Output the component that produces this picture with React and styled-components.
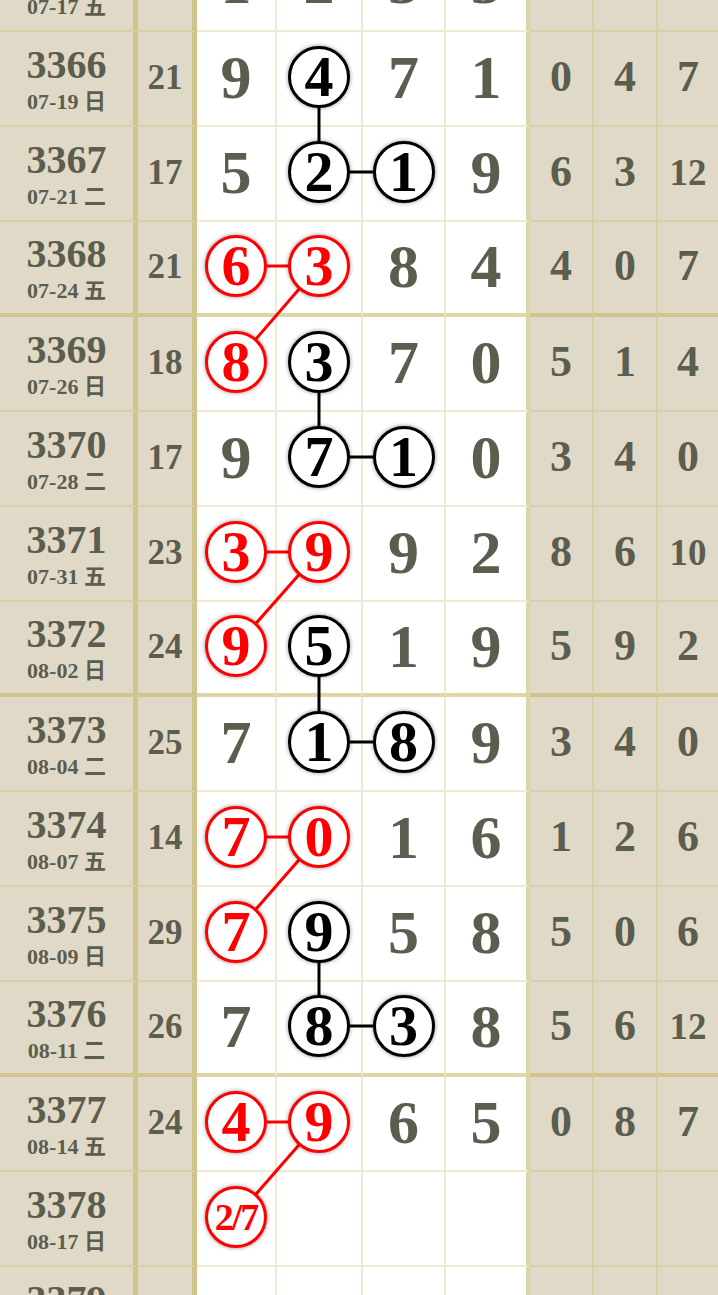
import React from "react";
import styled, { createGlobalStyle } from "styled-components";

const Global = createGlobalStyle`
  html, body { margin: 0; padding: 0; overflow: hidden; background: #ffffff; }
  body { font-family: "Liberation Serif", "Noto Sans CJK SC", serif; }
`;

const COLS = [138, 59, 80, 86, 83, 84, 64, 64, 60];
const ROW_H = 95;
const TOP_OFFSET = -63;
const THIN = "rgba(200,185,100,0.3)";
const THICK = "rgba(195,180,95,0.55)";
const INK = "#5b5d4f";

const Board = styled.div`
  position: relative;
  display: grid;
  grid-template-columns: ${COLS.map((c) => c + "px").join(" ")};
  grid-auto-rows: ${ROW_H}px;
  margin-top: ${TOP_OFFSET}px;
  width: 718px;
`;

const Cell = styled.div`
  box-sizing: border-box;
  display: flex;
  flex-direction: column;
  align-items: center;
  justify-content: center;
  padding-bottom: 3px;
  background: ${(p) => (p.$white ? "#ffffff" : "#e1d9c7")};
  border-right: ${(p) => p.$br}px solid ${(p) => (p.$br > 2 ? THICK : THIN)};
  border-bottom: ${(p) => (p.$thick ? 4 : 2)}px solid ${(p) => (p.$thick ? THICK : THIN)};
  color: ${INK};
  font-weight: 700;
  font-family: "Liberation Serif", "Noto Sans CJK SC", serif;
`;

const IssueNo = styled.div`
  font-size: 40px;
  line-height: 1;
  margin-top: 3px;
`;

const DateText = styled.div`
  font-size: 22px;
  line-height: 1;
  margin-top: 6px;
  white-space: nowrap;
  font-family: "Liberation Serif", "Noto Sans CJK SC", sans-serif;
`;

const Sum = styled.div`
  font-size: 35px;
  line-height: 1;
`;

const Digit = styled.div`
  font-size: 62px;
  line-height: 1;
`;

const Side = styled.div`
  font-size: ${(p) => (p.$two ? 37 : 44)}px;
  line-height: 1;
`;

const Ball = styled.div`
  position: relative;
  z-index: 2;
  box-sizing: border-box;
  width: 62px;
  height: 62px;
  border-radius: 50%;
  background: #ffffff;
  border: 3px solid ${(p) => (p.$red ? "#ff0000" : "#000000")};
  color: ${(p) => (p.$red ? "#ff0000" : "#000000")};
  box-shadow: 0 0 4px rgba(0, 0, 0, 0.45);
  display: flex;
  align-items: center;
  justify-content: center;
  font-size: ${(p) => (p.$small ? 38 : 58)}px;
  letter-spacing: ${(p) => (p.$small ? "-2px" : "0")};
  line-height: 1;
  font-weight: 700;
`;

const Lines = styled.svg`
  position: absolute;
  left: 0;
  top: 0;
  z-index: 1;
  pointer-events: none;
`;

const rows = [
  { no: "3365", date: "07-17 五", sum: "11", d: ["1", "2", "3", "5"], s: ["1", "0", "3"], m: {} },
  { no: "3366", date: "07-19 日", sum: "21", d: ["9", "4", "7", "1"], s: ["0", "4", "7"], m: { 1: "b" } },
  { no: "3367", date: "07-21 二", sum: "17", d: ["5", "2", "1", "9"], s: ["6", "3", "12"], m: { 1: "b", 2: "b" } },
  { no: "3368", date: "07-24 五", sum: "21", d: ["6", "3", "8", "4"], s: ["4", "0", "7"], m: { 0: "r", 1: "r" } },
  { no: "3369", date: "07-26 日", sum: "18", d: ["8", "3", "7", "0"], s: ["5", "1", "4"], m: { 0: "r", 1: "b" } },
  { no: "3370", date: "07-28 二", sum: "17", d: ["9", "7", "1", "0"], s: ["3", "4", "0"], m: { 1: "b", 2: "b" } },
  { no: "3371", date: "07-31 五", sum: "23", d: ["3", "9", "9", "2"], s: ["8", "6", "10"], m: { 0: "r", 1: "r" } },
  { no: "3372", date: "08-02 日", sum: "24", d: ["9", "5", "1", "9"], s: ["5", "9", "2"], m: { 0: "r", 1: "b" } },
  { no: "3373", date: "08-04 二", sum: "25", d: ["7", "1", "8", "9"], s: ["3", "4", "0"], m: { 1: "b", 2: "b" } },
  { no: "3374", date: "08-07 五", sum: "14", d: ["7", "0", "1", "6"], s: ["1", "2", "6"], m: { 0: "r", 1: "r" } },
  { no: "3375", date: "08-09 日", sum: "29", d: ["7", "9", "5", "8"], s: ["5", "0", "6"], m: { 0: "r", 1: "b" } },
  { no: "3376", date: "08-11 二", sum: "26", d: ["7", "8", "3", "8"], s: ["5", "6", "12"], m: { 1: "b", 2: "b" } },
  { no: "3377", date: "08-14 五", sum: "24", d: ["4", "9", "6", "5"], s: ["0", "8", "7"], m: { 0: "r", 1: "r" } },
  { no: "3378", date: "08-17 日", sum: "", d: ["2/7", "", "", ""], s: ["", "", ""], m: { 0: "r" } },
  { no: "3379", date: "08-19 二", sum: "", d: ["", "", "", ""], s: ["", "", ""], m: {} },
];

// connector segments: [row, col] -> [row, col], colour
const links = [
  [[1, 1], [2, 1], "b"], [[2, 1], [2, 2], "b"],
  [[3, 0], [3, 1], "r"], [[3, 1], [4, 0], "r"],
  [[4, 1], [5, 1], "b"], [[5, 1], [5, 2], "b"],
  [[6, 0], [6, 1], "r"], [[6, 1], [7, 0], "r"],
  [[7, 1], [8, 1], "b"], [[8, 1], [8, 2], "b"],
  [[9, 0], [9, 1], "r"], [[9, 1], [10, 0], "r"],
  [[10, 1], [11, 1], "b"], [[11, 1], [11, 2], "b"],
  [[12, 0], [12, 1], "r"], [[12, 1], [13, 0], "r"],
];

const isThick = (no) => Number(no) % 4 === 0;
const borderRight = [5, 5, 2, 2, 2, 4, 2, 2, 0];

const colLeft = (c) => COLS.slice(0, c).reduce((a, b) => a + b, 0);
const centerX = (dc) => {
  const c = dc + 2;
  return colLeft(c) + (COLS[c] - borderRight[c]) / 2;
};
const centerY = (r) => {
  const bb = isThick(rows[r].no) ? 4 : 2;
  return r * ROW_H + (ROW_H - bb - 3) / 2;
};

export default function App() {
  const totalH = rows.length * ROW_H;
  return (
    <>
      <Global />
      <Board>
        {rows.map((row) => {
          const thick = isThick(row.no);
          return (
            <React.Fragment key={row.no}>
              <Cell $br={borderRight[0]} $thick={thick}>
                <IssueNo>{row.no}</IssueNo>
                <DateText>{row.date}</DateText>
              </Cell>
              <Cell $br={borderRight[1]} $thick={thick}>
                <Sum>{row.sum}</Sum>
              </Cell>
              {row.d.map((v, i) => (
                <Cell key={"d" + i} $white $br={borderRight[i + 2]} $thick={thick}>
                  {row.m[i] ? (
                    <Ball $red={row.m[i] === "r"} $small={v.length > 1}>
                      {v}
                    </Ball>
                  ) : (
                    <Digit>{v}</Digit>
                  )}
                </Cell>
              ))}
              {row.s.map((v, i) => (
                <Cell key={"s" + i} $br={borderRight[i + 6]} $thick={thick}>
                  <Side $two={v.length > 1}>{v}</Side>
                </Cell>
              ))}
            </React.Fragment>
          );
        })}
        <Lines width={718} height={totalH} viewBox={`0 0 718 ${totalH}`}>
          {links.map(([a, b, c], i) => (
            <line
              key={i}
              x1={centerX(a[1])}
              y1={centerY(a[0])}
              x2={centerX(b[1])}
              y2={centerY(b[0])}
              stroke={c === "r" ? "#ff0000" : "#000000"}
              strokeWidth={3}
            />
          ))}
        </Lines>
      </Board>
    </>
  );
}
